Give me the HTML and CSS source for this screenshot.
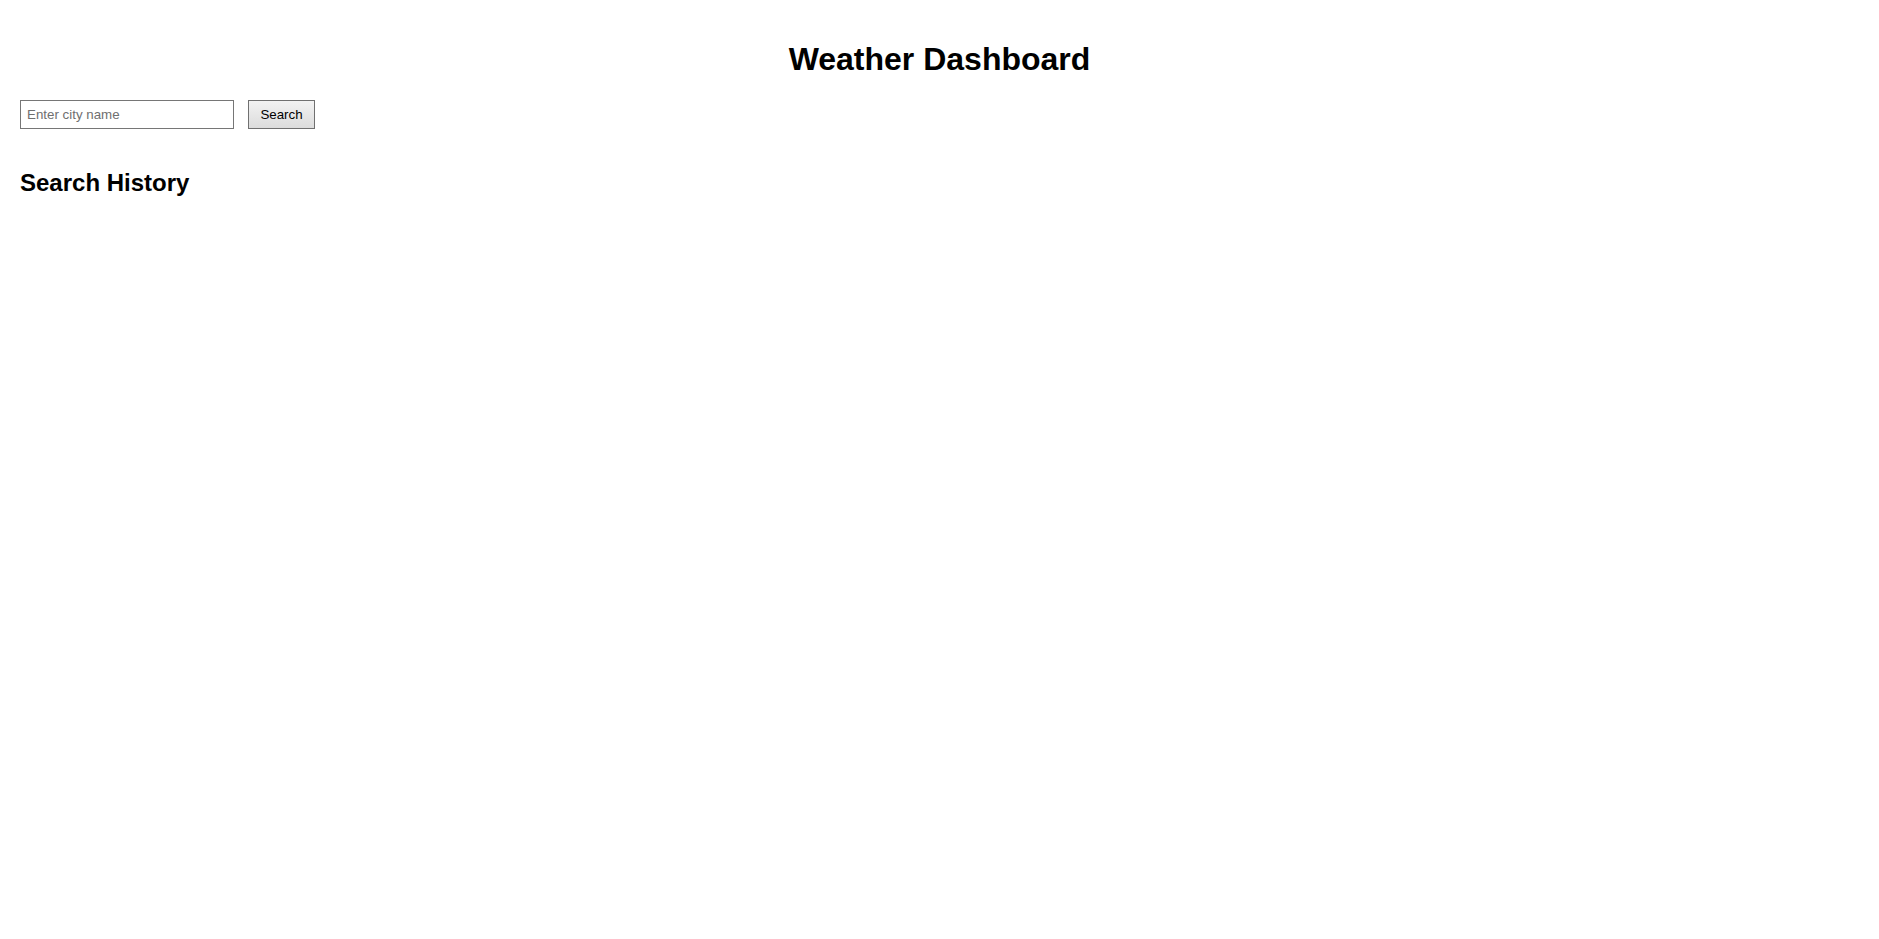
FILE: index.html
```html
<!DOCTYPE html>
<html lang="en">
<head>
<meta charset="utf-8">
<title>Weather Dashboard</title>
<link rel="stylesheet" href="styles.css">
</head>
<body>
<div class="page">
  <h1 class="title">Weather Dashboard</h1>
  <div class="search-row">
    <input class="city-input" type="text" placeholder="Enter city name">
    <button class="search-btn" type="button">Search</button>
  </div>
  <h2 class="history-title">Search History</h2>
  <div class="history-list"></div>
</div>
</body>
</html>
```

FILE: styles.css
```css
html, body {
  margin: 0;
  padding: 0;
  background: #ffffff;
}
body {
  font-family: "Liberation Sans", Arial, sans-serif;
  color: #000000;
}
.page {
  padding: 20px;
}
.title {
  font-size: 32px;
  font-weight: bold;
  text-align: center;
  margin: 21px 0 22px 0;
  line-height: normal;
}
.search-row {
  display: flex;
  align-items: center;
  gap: 14px;
  margin: 0;
}
.city-input {
  box-sizing: content-box;
  width: 200px;
  height: 15px;
  padding: 6px;
  border: 1px solid #767676;
  font-family: "Liberation Sans", Arial, sans-serif;
  font-size: 13.333px;
  line-height: 15px;
  margin: 0;
  outline: none;
  border-radius: 0;
}
.city-input::placeholder {
  color: #6f6f6f;
}
.search-btn {
  box-sizing: border-box;
  height: 29px;
  width: 67px;
  padding: 0;
  margin: 0;
  font-family: "Liberation Sans", Arial, sans-serif;
  font-size: 13.333px;
  color: #000;
  border: 1px solid #707070;
  border-radius: 0;
  background: linear-gradient(#f2f2f2, #dcdcdc);
}
.history-title {
  font-size: 24px;
  font-weight: bold;
  margin: 40px 0 20px 0;
  line-height: normal;
}
```
